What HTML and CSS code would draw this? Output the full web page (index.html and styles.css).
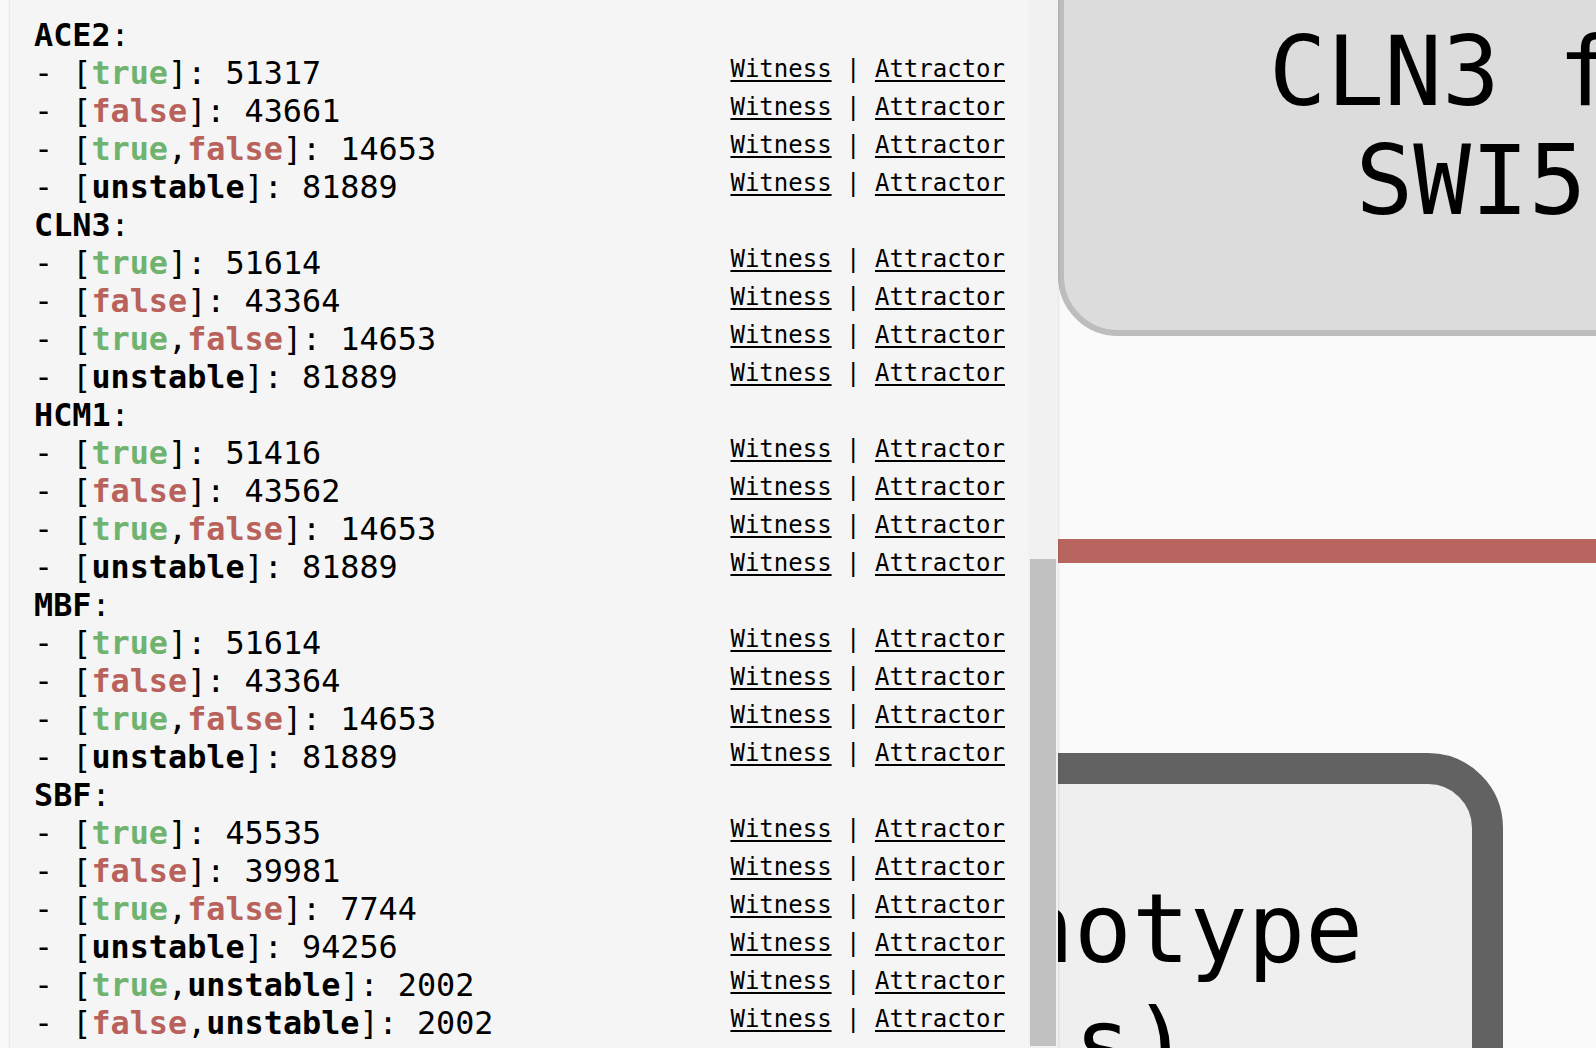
FILE: index.html
```html
<!DOCTYPE html>
<html lang="en">
<head>
<meta charset="utf-8">
<title>Attractor summary</title>
<link rel="stylesheet" href="styles.css">
</head>
<body>
<div class="app">
  <aside class="panel">
    <div class="list">
      <div class="row"><span class="label"><b>ACE2</b>:</span></div>
      <div class="row"><span class="label">- [<b class="t">true</b>]: 51317</span><span class="links"><a href="#">Witness</a> | <a href="#">Attractor</a></span></div>
      <div class="row"><span class="label">- [<b class="f">false</b>]: 43661</span><span class="links"><a href="#">Witness</a> | <a href="#">Attractor</a></span></div>
      <div class="row"><span class="label">- [<b class="t">true</b>,<b class="f">false</b>]: 14653</span><span class="links"><a href="#">Witness</a> | <a href="#">Attractor</a></span></div>
      <div class="row"><span class="label">- [<b>unstable</b>]: 81889</span><span class="links"><a href="#">Witness</a> | <a href="#">Attractor</a></span></div>

      <div class="row"><span class="label"><b>CLN3</b>:</span></div>
      <div class="row"><span class="label">- [<b class="t">true</b>]: 51614</span><span class="links"><a href="#">Witness</a> | <a href="#">Attractor</a></span></div>
      <div class="row"><span class="label">- [<b class="f">false</b>]: 43364</span><span class="links"><a href="#">Witness</a> | <a href="#">Attractor</a></span></div>
      <div class="row"><span class="label">- [<b class="t">true</b>,<b class="f">false</b>]: 14653</span><span class="links"><a href="#">Witness</a> | <a href="#">Attractor</a></span></div>
      <div class="row"><span class="label">- [<b>unstable</b>]: 81889</span><span class="links"><a href="#">Witness</a> | <a href="#">Attractor</a></span></div>

      <div class="row"><span class="label"><b>HCM1</b>:</span></div>
      <div class="row"><span class="label">- [<b class="t">true</b>]: 51416</span><span class="links"><a href="#">Witness</a> | <a href="#">Attractor</a></span></div>
      <div class="row"><span class="label">- [<b class="f">false</b>]: 43562</span><span class="links"><a href="#">Witness</a> | <a href="#">Attractor</a></span></div>
      <div class="row"><span class="label">- [<b class="t">true</b>,<b class="f">false</b>]: 14653</span><span class="links"><a href="#">Witness</a> | <a href="#">Attractor</a></span></div>
      <div class="row"><span class="label">- [<b>unstable</b>]: 81889</span><span class="links"><a href="#">Witness</a> | <a href="#">Attractor</a></span></div>

      <div class="row"><span class="label"><b>MBF</b>:</span></div>
      <div class="row"><span class="label">- [<b class="t">true</b>]: 51614</span><span class="links"><a href="#">Witness</a> | <a href="#">Attractor</a></span></div>
      <div class="row"><span class="label">- [<b class="f">false</b>]: 43364</span><span class="links"><a href="#">Witness</a> | <a href="#">Attractor</a></span></div>
      <div class="row"><span class="label">- [<b class="t">true</b>,<b class="f">false</b>]: 14653</span><span class="links"><a href="#">Witness</a> | <a href="#">Attractor</a></span></div>
      <div class="row"><span class="label">- [<b>unstable</b>]: 81889</span><span class="links"><a href="#">Witness</a> | <a href="#">Attractor</a></span></div>

      <div class="row"><span class="label"><b>SBF</b>:</span></div>
      <div class="row"><span class="label">- [<b class="t">true</b>]: 45535</span><span class="links"><a href="#">Witness</a> | <a href="#">Attractor</a></span></div>
      <div class="row"><span class="label">- [<b class="f">false</b>]: 39981</span><span class="links"><a href="#">Witness</a> | <a href="#">Attractor</a></span></div>
      <div class="row"><span class="label">- [<b class="t">true</b>,<b class="f">false</b>]: 7744</span><span class="links"><a href="#">Witness</a> | <a href="#">Attractor</a></span></div>
      <div class="row"><span class="label">- [<b>unstable</b>]: 94256</span><span class="links"><a href="#">Witness</a> | <a href="#">Attractor</a></span></div>
      <div class="row"><span class="label">- [<b class="t">true</b>,<b>unstable</b>]: 2002</span><span class="links"><a href="#">Witness</a> | <a href="#">Attractor</a></span></div>
      <div class="row"><span class="label">- [<b class="f">false</b>,<b>unstable</b>]: 2002</span><span class="links"><a href="#">Witness</a> | <a href="#">Attractor</a></span></div>
    </div>
    <div class="scrollbar"><div class="thumb"></div></div>
  </aside>
  <main class="canvas">
    <div class="node node-top">CLN3 fx<br>SWI5</div>
    <div class="edge"></div>
    <div class="node node-pheno">Phenotype<br>(s)</div>
  </main>
</div>
</body>
</html>
```
FILE: styles.css
```css
html, body {
  margin: 0;
  padding: 0;
  background: #fafafa;
  overflow: hidden;
}

.app {
  display: flex;
  height: 1048px;
  padding-left: 10px;
  overflow: hidden;
  font-family: "DejaVu Sans Mono", "Liberation Mono", monospace;
  color: #000;
}

.panel {
  flex: none;
  width: 1048px;
  display: flex;
  background: #f5f5f5;
  box-shadow: 0 0 3px rgba(0, 0, 0, 0.18);
  position: relative;
  z-index: 1;
}

.list {
  flex: 1;
  padding: 16px 23px 0 24px;
  overflow: hidden;
}

.row {
  display: flex;
  justify-content: space-between;
  align-items: flex-start;
  height: 38px;
}

.label {
  font-size: 31.8px;
  line-height: 38px;
  white-space: pre;
}

.label b {
  font-weight: bold;
}

.t { color: #6fb36f; }
.f { color: #b9625c; }

.links {
  font-size: 24px;
  line-height: 28px;
  margin-top: 1px;
  white-space: pre;
}

.links a {
  color: #000;
  text-decoration: underline;
  text-decoration-thickness: 2px;
  text-underline-offset: 3px;
}

.scrollbar {
  flex: none;
  width: 30px;
  box-sizing: border-box;
  padding: 559px 2px 2px 2px;
  background: #f1f1f1;
  display: flex;
  flex-direction: column;
}

.thumb {
  flex: 1;
  background: #c1c1c1;
}

.canvas {
  flex: 1;
  position: relative;
  overflow: hidden;
  background: #fafafa;
}

.node {
  position: absolute;
  box-sizing: border-box;
  font-size: 96px;
  line-height: 109px;
  text-align: center;
  white-space: pre;
}

.node-top {
  left: 0;
  top: -120px;
  width: 826px;
  padding: 132px 0 94px;
  background: #dcdcdc;
  border: 6px solid #bdbdbd;
  border-radius: 60px;
}

.edge {
  position: absolute;
  left: 0;
  right: 0;
  top: 539px;
  height: 24px;
  background: #b9655f;
}

.node-pheno {
  left: -355px;
  top: 753px;
  width: 800px;
  height: 500px;
  line-height: 115px;
  padding-top: 88px;
  background: #efefef;
  border: 31px solid #626262;
  border-radius: 75px;
}
```
